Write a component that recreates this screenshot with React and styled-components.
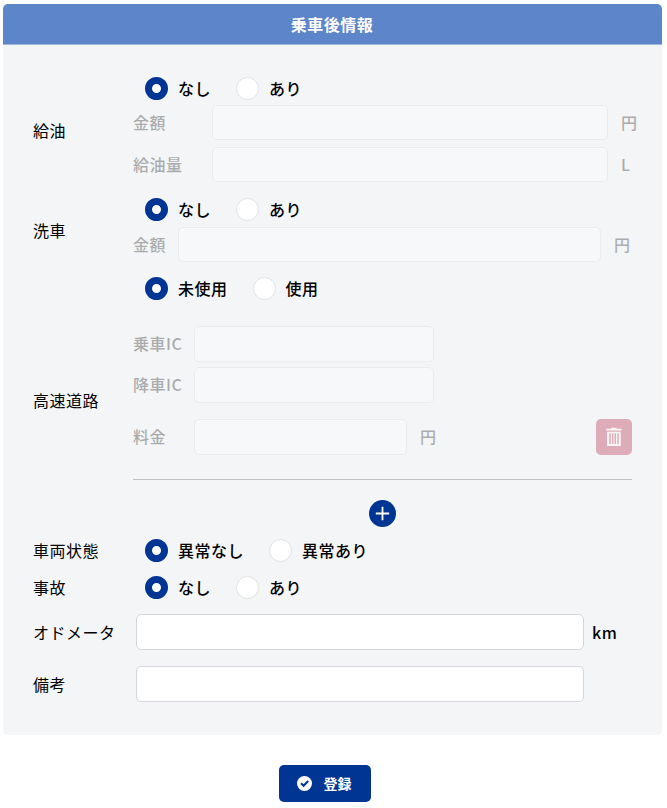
import React, { useState } from 'react';
import styled, { createGlobalStyle } from 'styled-components';

const GlobalStyle = createGlobalStyle`
  * {
    box-sizing: border-box;
  }

  body {
    margin: 0;
    background-color: #fff;
    color: #000;
    font-family: 'Noto Sans CJK JP', sans-serif;
    font-size: 16px;
    letter-spacing: 0.5px;
    line-height: 24px;
  }
`;

const Page = styled.form`
  display: flex;
  flex-direction: column;
  align-items: center;
  padding-top: 4px;
  padding-right: 2px;
`;

const Panel = styled.div`
  width: 659px;
  height: 731px;
  background-color: #f3f5f7;
  border-radius: 5px;
  overflow: hidden;
`;

const PanelHeader = styled.h2`
  display: flex;
  align-items: center;
  justify-content: center;
  height: 41px;
  margin: 0;
  padding-right: 1px;
  background-color: #5c85ca;
  border-bottom: 1px solid #9fb7e0;
  color: #fff;
  font-size: 16px;
  font-weight: 700;
`;

const PanelBody = styled.div`
  padding: 25px 0 0 30px;
`;

const Section = styled.div`
  display: flex;
  align-items: center;
  height: ${({ $height }) => $height}px;
`;

const SectionLabel = styled.div`
  flex: 0 0 100px;
  padding-bottom: ${({ $raised }) => ($raised ? 2 : 0)}px;
  white-space: nowrap;
`;

const SectionContent = styled.div`
  display: flex;
  flex-direction: column;
  flex: 1;
  align-self: stretch;
  padding-top: ${({ $top }) => $top}px;
`;

const RadioGroup = styled.div`
  display: flex;
  align-items: center;
  gap: 25px;
  height: 23px;
  margin-bottom: ${({ $bottom }) => $bottom || 0}px;
  padding-left: 12px;
`;

const RadioLabel = styled.label`
  display: flex;
  align-items: center;
  gap: 10px;
  height: 23px;
  font-weight: 500;
`;

const RadioText = styled.span`
  padding-bottom: 2px;
`;

const Radio = styled.input`
  appearance: none;
  width: 23px;
  height: 23px;
  margin: 0;
  background-color: #fff;
  border: 1px solid #dfe1e3;
  border-radius: 50%;

  &:checked {
    border: 7px solid #003594;
  }
`;

const Field = styled.div`
  display: flex;
  align-items: center;
  height: 35px;
  margin-bottom: ${({ $bottom }) => $bottom || 0}px;
  color: #000;
  opacity: ${({ $disabled }) => ($disabled ? 0.3 : 1)};
`;

const FieldLabel = styled.span`
  flex: 0 0 ${({ $width }) => $width}px;
  padding-bottom: 2px;
  font-weight: 500;
`;

const Input = styled.input`
  width: ${({ $width }) => $width}px;
  height: ${({ $height }) => $height || 35}px;
  margin: 0;
  padding: 0 10px;
  background-color: #fff;
  border: 1px solid #d5d7da;
  border-radius: 5px;
  font: inherit;
`;

const Unit = styled.span`
  margin-left: ${({ $gap }) => $gap || 13}px;
  padding-bottom: ${({ $gap }) => ($gap ? 0 : 2)}px;
  font-weight: 500;
`;

const TollRow = styled.div`
  display: flex;
  justify-content: space-between;
  width: 499px;
  height: 61px;
  border-bottom: 1px solid #bfc2c4;
`;

const DeleteButton = styled.button`
  display: flex;
  align-items: center;
  justify-content: center;
  width: 36px;
  height: 36px;
  padding: 0;
  background-color: #ddacb8;
  border: 0;
  border-radius: 5px;
`;

const AddButton = styled.button`
  display: flex;
  align-items: center;
  justify-content: center;
  width: 27px;
  height: 27px;
  margin: 20px 0 0 236px;
  padding: 0;
  background-color: #003594;
  border: 0;
  border-radius: 50%;
`;

const SubmitButton = styled.button`
  display: flex;
  align-items: center;
  justify-content: center;
  gap: 12px;
  width: 92px;
  height: 37px;
  margin: 30px 15px 0 0;
  padding: 0 2px 0 0;
  background-color: #003594;
  border: 0;
  border-radius: 5px;
  color: #fff;
  font-family: inherit;
  font-size: 14px;
  font-weight: 700;
  line-height: 20px;
`;

const SubmitText = styled.span`
  padding-bottom: 2px;
`;

const TrashIcon = () => (
  <svg width="16" height="20" viewBox="0 0 16 20">
    <path
      fill="#f8f5f7"
      fillRule="evenodd"
      d="M5.2 0.7H10.3V1.8H15.5V3.4H0.2V1.8H5.2ZM1 4.7H14.8V19H1ZM3.2 6.3V17H4.7V6.3ZM6 6.3V17H7.4V6.3ZM8.6 6.3V17H10V6.3ZM11.3 6.3V17H12.7V6.3Z"
    />
  </svg>
);

const PlusIcon = () => (
  <svg width="15" height="15" viewBox="0 0 15 15">
    <path d="M7.5 0.8V14.2M0.8 7.5H14.2" stroke="#fff" strokeWidth="1.8" />
  </svg>
);

const CheckIcon = () => (
  <svg width="15" height="15" viewBox="0 0 15 15" fill="none">
    <circle cx="7.5" cy="7.5" r="7.5" fill="#fff" />
    <path d="M4 7.3L6.6 9.8L11.2 5.1" stroke="#003594" strokeWidth="2.1" />
  </svg>
);

const Choice = ({ name, options, bottom }) => {
  const [selected, setSelected] = useState(options[0]);

  return (
    <RadioGroup $bottom={bottom}>
      {options.map((option) => (
        <RadioLabel key={option}>
          <Radio
            type="radio"
            name={name}
            checked={selected === option}
            onChange={() => setSelected(option)}
          />
          <RadioText>{option}</RadioText>
        </RadioLabel>
      ))}
    </RadioGroup>
  );
};

const TextField = ({ label, labelWidth, width, height, unit, bottom }) => (
  <Field $disabled $bottom={bottom}>
    <FieldLabel $width={labelWidth}>{label}</FieldLabel>
    <Input $width={width} $height={height} disabled />
    {unit && <Unit>{unit}</Unit>}
  </Field>
);

const App = () => (
  <>
    <GlobalStyle />
    <Page onSubmit={(e) => e.preventDefault()}>
      <Panel>
        <PanelHeader>乗車後情報</PanelHeader>
        <PanelBody>
          <Section $height={121}>
            <SectionLabel $raised>給油</SectionLabel>
            <SectionContent $top={7}>
              <Choice name="refuel" options={['なし', 'あり']} bottom={5} />
              <TextField label="金額" labelWidth={79} width={396} unit="円" bottom={7} />
              <TextField label="給油量" labelWidth={79} width={396} unit="L" />
            </SectionContent>
          </Section>
          <Section $height={80}>
            <SectionLabel $raised>洗車</SectionLabel>
            <SectionContent $top={7}>
              <Choice name="wash" options={['なし', 'あり']} bottom={6} />
              <TextField label="金額" labelWidth={45} width={423} unit="円" />
            </SectionContent>
          </Section>
          <Section $height={260}>
            <SectionLabel $raised>高速道路</SectionLabel>
            <SectionContent $top={6}>
              <Choice name="highway" options={['未使用', '使用']} bottom={26} />
              <TextField label="乗車IC" labelWidth={61} width={240} height={36} bottom={6} />
              <TextField label="降車IC" labelWidth={61} width={240} height={36} bottom={17} />
              <TollRow>
                <TextField label="料金" labelWidth={61} width={213} height={36} unit="円" />
                <DeleteButton type="button" aria-label="削除">
                  <TrashIcon />
                </DeleteButton>
              </TollRow>
              <AddButton type="button" aria-label="追加">
                <PlusIcon />
              </AddButton>
            </SectionContent>
          </Section>
          <Section $height={38}>
            <SectionLabel>車両状態</SectionLabel>
            <SectionContent $top={8}>
              <Choice name="condition" options={['異常なし', '異常あり']} />
            </SectionContent>
          </Section>
          <Section $height={37}>
            <SectionLabel $raised>事故</SectionLabel>
            <SectionContent $top={7}>
              <Choice name="accident" options={['なし', 'あり']} />
            </SectionContent>
          </Section>
          <Section $height={51}>
            <SectionLabel>オドメータ</SectionLabel>
            <Field>
              <FieldLabel $width={3} />
              <Input $width={448} $height={36} />
              <Unit $gap={8}>km</Unit>
            </Field>
          </Section>
          <Section $height={53}>
            <SectionLabel>備考</SectionLabel>
            <Field>
              <FieldLabel $width={3} />
              <Input $width={448} $height={36} />
            </Field>
          </Section>
        </PanelBody>
      </Panel>
      <SubmitButton type="submit">
        <CheckIcon />
        <SubmitText>登録</SubmitText>
      </SubmitButton>
    </Page>
  </>
);

export default App;
